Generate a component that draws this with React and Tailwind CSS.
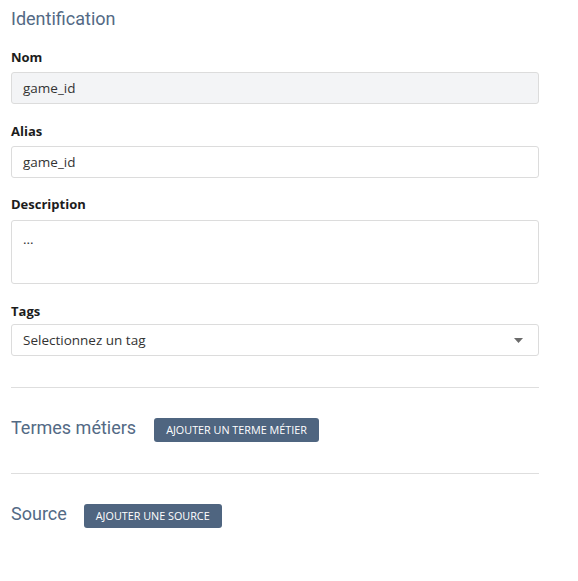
export default function App() {
  const body = { fontFamily: '"Open Sans", "Noto Sans", sans-serif' };
  const head = { fontFamily: 'Roboto, "Liberation Sans", sans-serif' };
  const inputCls =
    "block w-full h-[32px] rounded-[3px] border border-[#dcdcdc] px-[11px] text-[13.5px] text-[#333] leading-[30px]";
  return (
    <div className="w-[578px] h-[581px] bg-white pl-[11px] pt-[7px]" style={body}>
      <div className="w-[528px]">
        <h2 className="text-[18px] leading-[24px] text-[#536a85] font-normal" style={head}>
          Identification
        </h2>

        <div className="mt-[16px]">
          <div className="text-[13px] leading-[20px] font-bold text-[#1c1c1c] mb-[5px]">Nom</div>
          <div className={inputCls + " bg-[#f3f4f6]"}>game_id</div>
        </div>

        <div className="mt-[17px]">
          <div className="text-[13px] leading-[20px] font-bold text-[#1c1c1c] mb-[5px]">Alias</div>
          <div className={inputCls + " bg-white"}>game_id</div>
        </div>

        <div className="mt-[16px]">
          <div className="text-[13px] leading-[20px] font-bold text-[#1c1c1c] mb-[6px]">Description</div>
          <div className="block w-full h-[64px] rounded-[3px] border border-[#dcdcdc] px-[11px] pt-[8px] text-[13.5px] text-[#333] leading-[20px]">
            ...
          </div>
        </div>

        <div className="mt-[17px]">
          <div className="text-[13px] leading-[20px] font-bold text-[#1c1c1c] mb-[3px]">Tags</div>
          <div className="flex items-center justify-between w-full h-[32px] rounded-[3px] border border-[#dcdcdc] pl-[11px] pr-[15px] text-[13.5px] text-[#333]">
            <span>Selectionnez un tag</span>
            <svg width="9" height="5" viewBox="0 0 9 5">
              <path d="M0 0 L9 0 L4.5 5 Z" fill="#6b6b6b" />
            </svg>
          </div>
        </div>

        <div className="mt-[31px] h-px bg-[#dedede]" />

        <div className="mt-[30px] flex items-center gap-[18px] h-[24px]">
          <h2 className="text-[18px] leading-[24px] text-[#536a85] font-normal -mt-[5px]" style={head}>
            Termes métiers
          </h2>
          <button className="h-[24px] px-[12px] rounded-[3px] bg-[#4f6580] text-white text-[10.8px] leading-[24px] uppercase">
            Ajouter un terme métier
          </button>
        </div>

        <div className="mt-[31px] h-px bg-[#dedede]" />

        <div className="mt-[30px] flex items-center gap-[17px] h-[24px]">
          <h2 className="text-[18px] leading-[24px] text-[#536a85] font-normal -mt-[5px]" style={head}>
            Source
          </h2>
          <button className="h-[24px] px-[12px] rounded-[3px] bg-[#4f6580] text-white text-[10.8px] leading-[24px] uppercase">
            Ajouter une source
          </button>
        </div>
      </div>
    </div>
  );
}
